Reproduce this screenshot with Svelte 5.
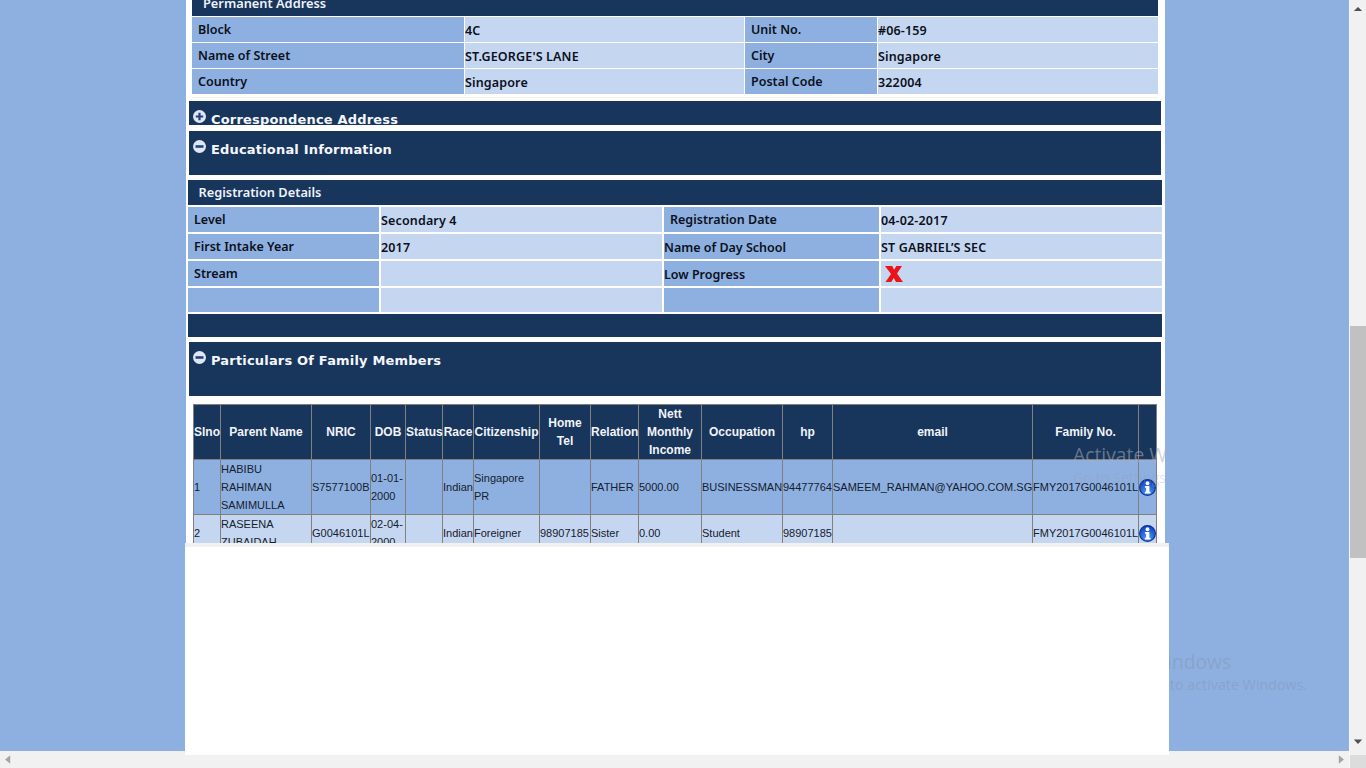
<script>
	const permanent = [
		['Block', '4C', 'Unit No.', '#06-159'],
		['Name of Street', "ST.GEORGE'S LANE", 'City', 'Singapore'],
		['Country', 'Singapore', 'Postal Code', '322004']
	];

	const widths = [27, 91, 59, 35, 37, 31, 66, 51, 48, 63, 81, 50, 200, 106, 18];
	const heads = ['Slno', 'Parent Name', 'NRIC', 'DOB', 'Status', 'Race', 'Citizenship', 'Home Tel', 'Relation', 'Nett Monthly Income', 'Occupation', 'hp', 'email', 'Family No.', ''];
	const members = [
		['1', 'HABIBU RAHIMAN SAMIMULLA', 'S7577100B', '01-01-2000', '', 'Indian', 'Singapore PR', '', 'FATHER', '5000.00', 'BUSINESSMAN', '94477764', 'SAMEEM_RAHMAN@YAHOO.COM.SG', 'FMY2017G0046101L'],
		['2', 'RASEENA ZUBAIDAH', 'G0046101L', '02-04-2000', '', 'Indian', 'Foreigner', '98907185', 'Sister', '0.00', 'Student', '98907185', '', 'FMY2017G0046101L']
	];
</script>

<div class="page">
	<div class="viewport">
		<div class="column">
			<div class="panel-head perm-head">Permanent Address</div>
			<div class="info perm">
				{#each permanent as row}
					<div class="lab">{row[0]}</div>
					<div class="val">{row[1]}</div>
					<div class="lab">{row[2]}</div>
					<div class="val">{row[3]}</div>
				{/each}
			</div>

			<div class="section short">
				<svg class="toggle" viewBox="0 0 13 13"><circle cx="6.5" cy="6.5" r="6.5" fill="#dfe6f5" /><path d="M2.8 5.4h2.6V2.8h2.2v2.6h2.6v2.2H7.6v2.6H5.4V7.6H2.8z" fill="#23427c" /></svg>
				<span>Correspondence Address</span>
			</div>
			<div class="section edu">
				<svg class="toggle" viewBox="0 0 13 13"><circle cx="6.5" cy="6.5" r="6.5" fill="#dfe6f5" /><rect x="2.5" y="5.2" width="8" height="2.6" fill="#23427c" /></svg>
				<span>Educational Information</span>
			</div>

			<div class="panel-head reg-head">Registration Details</div>
			<div class="info reg">
				<div class="lab">Level</div>
				<div class="val">Secondary 4</div>
				<div class="lab">Registration Date</div>
				<div class="val">04-02-2017</div>

				<div class="lab">First Intake Year</div>
				<div class="val">2017</div>
				<div class="lab flush">Name of Day School</div>
				<div class="val">ST GABRIEL’S SEC</div>

				<div class="lab">Stream</div>
				<div class="val"></div>
				<div class="lab flush">Low Progress</div>
				<div class="val">
					<svg class="cross" viewBox="0 0 18 16"><path d="M0 0h7.200l1.900 3.800L11.400 0H17l-5 7.400L18 16h-7l-2.200-4-2.500 4H0.500L6 8z" fill="#ea1319" /></svg>
				</div>

				<div class="lab"></div>
				<div class="val"></div>
				<div class="lab"></div>
				<div class="val"></div>
			</div>
			<div class="reg-foot"></div>

			<div class="section family">
				<svg class="toggle" viewBox="0 0 13 13"><circle cx="6.5" cy="6.5" r="6.5" fill="#dfe6f5" /><rect x="2.5" y="5.2" width="8" height="2.6" fill="#23427c" /></svg>
				<span>Particulars Of Family Members</span>
			</div>

			<div class="table-clip">
				<table>
					<colgroup>
						{#each widths as w}
							<col style="width: {w}px" />
						{/each}
					</colgroup>
					<thead>
						<tr>
							{#each heads as h}
								<th>{h}</th>
							{/each}
						</tr>
					</thead>
					<tbody>
						{#each members as m}
							<tr>
								{#each m as cell}
									<td>{cell}</td>
								{/each}
								<td class="info-cell">
									<svg class="info-icon" viewBox="0 0 18 18">
										<defs>
											<radialGradient id="ball" cx="0.5" cy="0.8" r="0.8">
												<stop offset="0" stop-color="#4f9bf5" />
												<stop offset="1" stop-color="#0a3cc0" />
											</radialGradient>
										</defs>
										<circle cx="9" cy="9" r="8.400" fill="url(#ball)" stroke="#0f358f" stroke-width="1.200" />
										<circle cx="9" cy="4.500" r="2" fill="#fff" />
										<path d="M6.300 7.300h4.700v6.200h1.200v1.900H6.200v-1.900h1.300V9.200H6.300z" fill="#fff" />
									</svg>
								</td>
							</tr>
						{/each}
					</tbody>
				</table>
			</div>

			<div class="blank"></div>
		</div>
	</div>

	<div class="vbar">
		<div class="arrow up"></div>
		<div class="track"><div class="thumb"></div></div>
		<div class="arrow down"></div>
		<div class="corner"></div>
	</div>

	<div class="hbar">
		<div class="arrow left"></div>
		<div class="arrow right"></div>
	</div>

	<!-- windows watermark, shows twice in the capture -->
	<div class="mark mark-low">
		<div class="mark-big">Activate Windows</div>
		<div class="mark-small">Go to Settings to activate Windows.</div>
	</div>
	<div class="mark mark-high">
		<div class="mark-big">Activate Windows</div>
		<div class="mark-small">Go to Settings to activate Windows.</div>
	</div>
</div>

<style>
	:global(body) {
		margin: 0;
	}

	.page {
		position: relative;
		display: flex;
		width: 1366px;
		height: 768px;
		overflow: hidden;
		background: #8db0e1;
		font-family: 'DejaVu Sans', Verdana, sans-serif;
	}

	.viewport {
		width: 1349px;
		height: 768px;
		overflow: hidden;
	}

	.column {
		position: relative;
		z-index: 1;
		display: flex;
		flex-direction: column;
		width: 979px;
		margin: -7px 0 0 186px;
		background: #fff;
	}

	.panel-head {
		box-sizing: border-box;
		background: #18355c;
		color: #eef2f9;
		font-size: 12.8px;
		font-weight: 600;
		font-family: 'Noto Sans', 'DejaVu Sans', sans-serif;
	}

	.perm-head {
		height: 23px;
		margin: 0 7px 0 6px;
		padding-left: 11px;
		line-height: 20px;
	}

	.reg-head {
		height: 25px;
		margin: 5px 3px 0 2px;
		padding-left: 10.5px;
		line-height: 25px;
	}

	.info {
		display: grid;
		color: #0c1020;
		font-family: 'Noto Sans', 'DejaVu Sans', sans-serif;
		font-size: 12.5px;
		font-weight: 600;
	}

	.perm {
		grid-template-columns: 272px 279px 132px 280px;
		grid-auto-rows: 25px;
		gap: 1px;
		margin: 1px 7px 0 6px;
		padding-bottom: 3px;
		border-bottom: 1px solid #f4f1e6;
	}

	.reg {
		grid-template-columns: 191px 281px 215px 281px;
		grid-template-rows: 25px 25px 25px 24px;
		gap: 2px;
		margin: 2px 3px 0 2px;
	}

	.lab,
	.val {
		overflow: hidden;
		white-space: nowrap;
		line-height: 24px;
	}

	.lab {
		padding-left: 6px;
		background: #8db0e1;
		line-height: 26px;
	}

	.lab.flush {
		padding-left: 0;
		line-height: 28px;
	}

	.val {
		padding-top: 2px;
		background: #c5d7f0;
		letter-spacing: 0.15px;
	}

	.cross {
		display: block;
		width: 18px;
		height: 16px;
		margin: 3px 0 0 4px;
	}

	.section {
		display: flex;
		align-items: flex-start;
		gap: 5.5px;
		margin: 0 4px 0 3px;
		padding: 9px 0 0 3.5px;
		box-sizing: border-box;
		overflow: hidden;
		background: #18355c;
		color: #f4f6fb;
		font-size: 13px;
		font-weight: 700;
		line-height: 18px;
		letter-spacing: 0.18px;
	}

	.toggle {
		flex: none;
		width: 13px;
		height: 13px;
	}

	.section span {
		margin-top: 1px;
		white-space: nowrap;
	}

	.short {
		height: 24px;
		margin-top: 3px;
	}

	.edu {
		height: 44px;
		margin-top: 6px;
	}

	.family {
		height: 54px;
		margin-top: 5px;
	}

	.reg-foot {
		height: 23px;
		margin: 2px 3px 0 2px;
		background: #18355c;
	}

	.table-clip {
		height: 139px;
		margin: 8px 8px 0 7px;
		overflow: hidden;
	}

	table {
		width: 964px;
		table-layout: fixed;
		border-collapse: collapse;
		border: 1px solid #808080;
		font-family: 'Liberation Sans', Arial, sans-serif;
		font-size: 12px;
		line-height: 18px;
	}

	th,
	td {
		padding: 0;
		border: 1px solid #808080;
	}

	th {
		height: 54px;
		background: #18355c;
		color: #f0f3f9;
		font-weight: 700;
		text-align: center;
	}

	td {
		color: #15202e;
		font-size: 11px;
	}

	tbody tr:nth-child(1) td {
		background: #8db0e1;
	}

	tbody tr:nth-child(2) td {
		background: #c5d7f0;
	}

	.info-icon {
		display: block;
		width: 17px;
		height: 17px;
	}

	.blank {
		height: 212px;
		margin: 0 -4px 0 -1px;
		box-sizing: border-box;
		border-top: 4px solid #eff1f3;
		background: #fff;
	}

	.vbar {
		position: relative;
		display: flex;
		flex-direction: column;
		width: 16px;
		height: 768px;
		border-left: 1px solid #f7f7f7;
		background: #f1f1f1;
	}

	.track {
		height: 717px;
	}

	.thumb {
		height: 232px;
		margin-top: 309px;
		background: #c1c1c1;
	}

	.vbar .arrow {
		width: 16px;
		height: 17px;
		background: #505050;
	}

	.corner {
		height: 13px;
		margin-top: 4px;
		background: #dcdcdc;
	}

	.up {
		clip-path: polygon(50% 41%, 76% 65%, 24% 65%);
	}

	.down {
		clip-path: polygon(24% 32%, 76% 32%, 50% 59%);
	}

	.hbar {
		position: absolute;
		left: 0;
		top: 751px;
		display: flex;
		justify-content: space-between;
		width: 1349px;
		height: 17px;
		background: #f1f1f1;
	}

	.hbar .arrow {
		width: 17px;
		height: 17px;
		background: #a3a3a3;
	}

	.left {
		clip-path: polygon(30% 50%, 60% 25%, 60% 75%);
	}

	.right {
		clip-path: polygon(40% 25%, 70% 50%, 40% 75%);
	}

	.mark {
		position: absolute;
		left: 1073px;
		font-family: 'Open Sans', 'Noto Sans', sans-serif;
		white-space: nowrap;
	}

	.mark-big {
		height: 24px;
		font-size: 19.3px;
		line-height: 24px;
	}

	.mark-small {
		height: 22px;
		font-size: 14.3px;
		line-height: 22px;
	}

	.mark-low {
		top: 650px;
		color: rgba(130, 130, 140, 0.3);
	}

	.mark-high {
		z-index: 2;
		top: 443px;
		width: 94px;
		overflow: hidden;
		color: rgba(170, 175, 185, 0.55);
	}

	.mark-high .mark-small {
		color: rgba(150, 155, 170, 0.3);
	}
</style>
